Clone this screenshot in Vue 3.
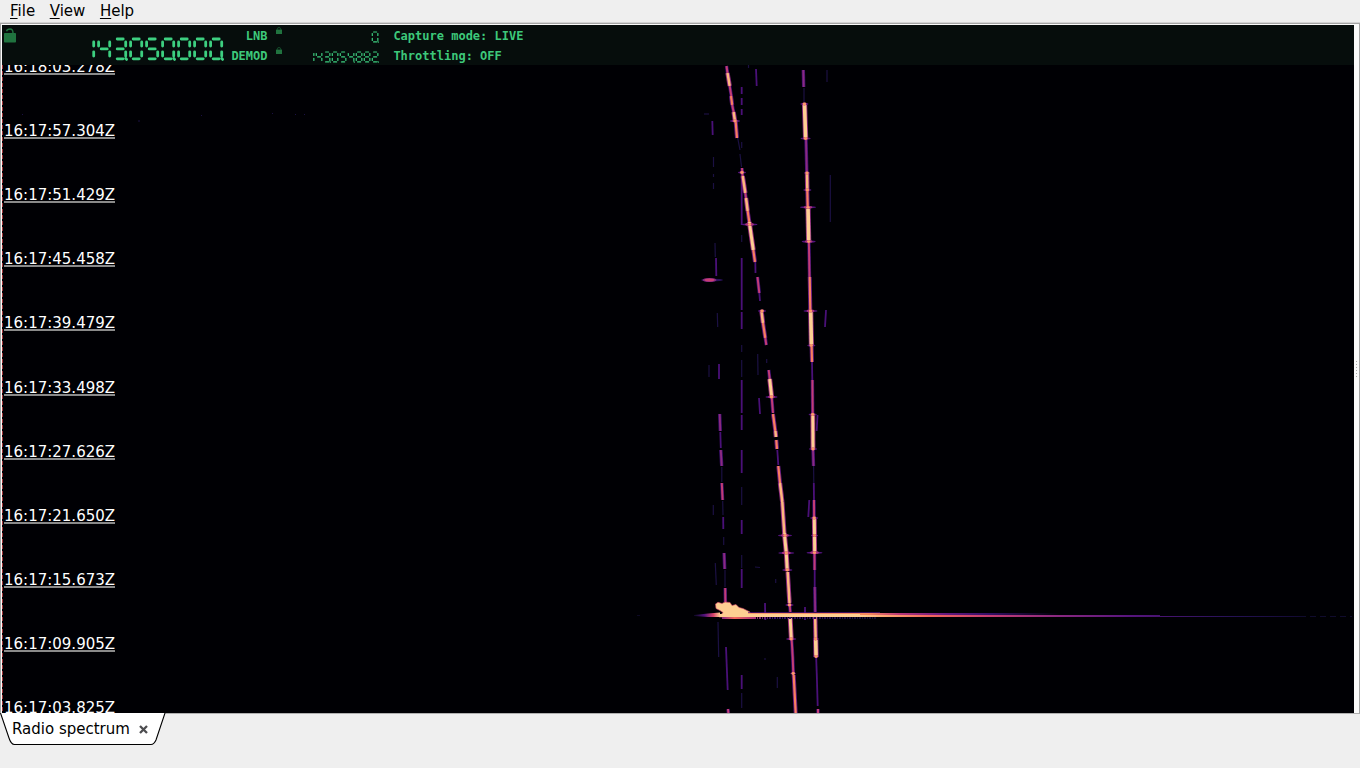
<template>
  <div class="window">
    <nav class="menu">
      <span v-for="item in menu" :key="item" class="menu__item"><u>{{ item[0] }}</u>{{ item.slice(1) }}</span>
    </nav>

    <main class="panel">
      <section class="view">
        <header class="bar">
          <svg class="bar__lock" viewBox="0 0 12 15">
            <rect x="0" y="5" width="12" height="9.5" rx="0.8" fill="#20733f" />
            <path d="M2.5 3.2 C3 1.4 4.5 1 6 1 C8.3 1 9 2 9 5" fill="none" stroke="#20733f" stroke-width="1.4" />
          </svg>
          <svg class="lcd lcd--big" viewBox="0 0 144 24" role="img" aria-label="143.050.000">
            <line v-for="(s, i) in lcd('143050000')" :key="i" :x1="s[0]" :y1="s[1]" :x2="s[2]" :y2="s[3]" />
          </svg>
          <div class="bar__labels">
            <span>LNB</span>
            <span>DEMOD</span>
          </div>
          <div class="bar__locks">
            <svg v-for="n in 2" :key="n" viewBox="0 0 6 7">
              <rect x="0" y="2.6" width="6" height="4.4" fill="#20733f" />
              <path d="M1.3 3 V1.8 Q1.3 0.6 3 0.6 T4.7 1.8 V3" fill="none" stroke="#174f2e" />
            </svg>
          </div>
          <div class="bar__values">
            <svg class="lcd" viewBox="0 0 144 24" role="img" aria-label="0">
              <line v-for="(s, i) in lcd('        0')" :key="i" :x1="s[0]" :y1="s[1]" :x2="s[2]" :y2="s[3]" />
            </svg>
            <svg class="lcd" viewBox="0 0 144 24" role="img" aria-label="143.054.882">
              <line v-for="(s, i) in lcd('143054882')" :key="i" :x1="s[0]" :y1="s[1]" :x2="s[2]" :y2="s[3]" />
            </svg>
          </div>
          <div class="bar__status">
            <span>Capture mode: LIVE</span>
            <span>Throttling: OFF</span>
          </div>
        </header>

        <div class="waterfall">
          <svg class="waterfall__plot" viewBox="2 65 1352 648">
            <defs>
              <linearGradient id="upper" gradientUnits="userSpaceOnUse" x1="740" y1="0" x2="1060" y2="0">
                <stop offset="0" stop-color="#fe9f6d" />
                <stop offset="0.4" stop-color="#f9885f" />
                <stop offset="0.5" stop-color="#b63679" />
                <stop offset="0.64" stop-color="#641a80" />
                <stop offset="0.78" stop-color="#331067" />
                <stop offset="1" stop-color="#000004" />
              </linearGradient>
              <linearGradient id="lower" gradientUnits="userSpaceOnUse" x1="860" y1="0" x2="1350" y2="0">
                <stop offset="0" stop-color="#fecf92" />
                <stop offset="0.05" stop-color="#fea973" />
                <stop offset="0.14" stop-color="#f4685c" />
                <stop offset="0.26" stop-color="#c83e73" />
                <stop offset="0.4" stop-color="#8c2981" />
                <stop offset="0.55" stop-color="#57157e" />
                <stop offset="0.76" stop-color="#251255" />
                <stop offset="1" stop-color="#05041a" />
              </linearGradient>
              <linearGradient id="head" gradientUnits="userSpaceOnUse" x1="694" y1="0" x2="720" y2="0">
                <stop offset="0" stop-color="#0d0925" />
                <stop offset="0.4" stop-color="#51127c" />
                <stop offset="0.75" stop-color="#d8456c" />
                <stop offset="1" stop-color="#fecf92" />
              </linearGradient>
              <linearGradient id="under" gradientUnits="userSpaceOnUse" x1="722" y1="0" x2="878" y2="0">
                <stop offset="0" stop-color="#8c2981" />
                <stop offset="0.08" stop-color="#f4685c" />
                <stop offset="0.2" stop-color="#b63679" />
                <stop offset="0.32" stop-color="#3b0f70" />
                <stop offset="1" stop-color="#140e36" />
              </linearGradient>
            </defs>

            <line class="marker" x1="2.5" y1="65" x2="2.5" y2="713" />

            <line v-for="(t, i) in faint" :key="'f' + i" :x1="t[0]" :y1="t[1]" :x2="t[2]" :y2="t[3]" :class="'level-' + t[4]" />

            <g v-for="(track, n) in tracks" :key="'t' + n">
              <line v-for="(t, i) in track" :key="'h' + i" :x1="t[0]" :y1="t[1]" :x2="t[2]" :y2="t[3]" :class="'halo-' + t[4]" />
              <line v-for="(t, i) in track" :key="i" :x1="t[0]" :y1="t[1]" :x2="t[2]" :y2="t[3]" :class="'level-' + t[4]" />
            </g>

            <g v-for="(c, i) in crossings" :key="'c' + i">
              <ellipse :cx="c[0]" :cy="c[1]" :rx="c[2]" ry="1.1" fill="#51127c" />
              <ellipse :cx="c[0]" :cy="c[1]" :rx="c[2] * 0.55" ry="1.4" fill="#a8327d" />
              <ellipse :cx="c[0]" :cy="c[1]" rx="1.7" ry="1.4" fill="#fd9a6a" />
            </g>

            <ellipse cx="712" cy="280" rx="11" ry="1.3" fill="#2a115c" />
            <ellipse cx="709.5" cy="280" rx="7" ry="2" fill="#822681" />
            <ellipse cx="709.5" cy="280" rx="5" ry="1.4" fill="#c83e73" />

            <!-- meteor echo -->
            <path class="echo" d="M715.5 604 L718 602.3 L722 603.5 L725 602 L730 602.5 L732 605.5 L736 604.5 L739 607.5 L743 608.5 L750 612 L751 617 L719 617 L723 612.5 L720 610.5 L716 608.5 Z" />
            <path d="M694 615 L708 613.4 L720 612.6 V617 L708 617 L694 616 Z" fill="url(#head)" />
            <rect x="748" y="612" width="132" height="1" fill="#51127c" opacity="0.7" />
            <rect x="748" y="613" width="312" height="2" fill="url(#upper)" />
            <rect x="720" y="614" width="140" height="3" fill="#fecf92" />
            <rect x="860" y="615" width="300" height="2" fill="url(#lower)" />
            <rect x="1160" y="616" width="140" height="1" fill="url(#lower)" />
            <line x1="1300" y1="616.5" x2="1352" y2="616.5" stroke="#100b2d" stroke-dasharray="6 4" />
            <rect x="722" y="617" width="32" height="2" fill="url(#under)" />
            <line x1="754" y1="618" x2="876" y2="618.01" stroke="url(#under)" stroke-width="2" stroke-dasharray="2 1 1 1" />
            <line x1="637" y1="615.5" x2="640" y2="615.5" stroke="#0d0925" />
          </svg>

          <div class="times">
            <span v-for="time in times" :key="time" class="times__item">{{ time }}</span>
          </div>
        </div>
      </section>
      <div class="handle"><i v-for="n in 6" :key="n" /></div>
    </main>

    <footer class="tabs">
      <div class="tab">
        <svg class="tab__shape" viewBox="0 0 168 33">
          <path d="M0.5 0 L9 25 Q11 31.5 14.5 31.5 H151 Q154 31.5 156 27 L165 0" fill="#fff" stroke="#000" stroke-width="1.1" />
        </svg>
        <span class="tab__name">Radio spectrum</span>
        <svg class="tab__close" viewBox="0 0 9 9">
          <path d="M1 1 L8 8 M8 1 L1 8" stroke="#4d4d50" stroke-width="2.3" />
        </svg>
      </div>
    </footer>
  </div>
</template>

<script setup>
const menu = ['File', 'View', 'Help']

const times = [
  '16:18:03.278Z', '16:17:57.304Z', '16:17:51.429Z', '16:17:45.458Z',
  '16:17:39.479Z', '16:17:33.498Z', '16:17:27.626Z', '16:17:21.650Z',
  '16:17:15.673Z', '16:17:09.905Z', '16:17:03.825Z'
]

// seven segment display, one digit is a 16x24 cell
const segments = {
  a: [5.2, 2, 11.2, 2],
  b: [13.7, 5, 13.7, 9],
  c: [13.7, 14.8, 13.7, 19],
  d: [5.2, 21.8, 11.2, 21.8],
  e: [2.6, 14.8, 2.6, 19],
  f: [2.6, 5, 2.6, 9],
  g: [5.2, 11.9, 11.2, 11.9]
}
const digits = {
  0: 'abcdef', 1: 'bc', 2: 'abged', 3: 'abgcd', 4: 'fgbc',
  5: 'afgcd', 6: 'afgecd', 7: 'abc', 8: 'abcdefg', 9: 'abcdfg'
}

const lcd = (value) => {
  const lines = []
  value.split('').forEach((ch, i) => {
    if (!digits[ch]) return
    const x = i * 16
    for (const name of digits[ch]) {
      const s = segments[name]
      lines.push([s[0] + x, s[1], s[2] + x, s[3]])
    }
    // group separator
    if (i % 3 === 2) lines.push([x + 13.8, 21.4, x + 14.6, 22.4])
  })
  return lines
}

// [x1, y1, x2, y2, level]
const tracks = [
  [
    [726.5, 66, 727.5, 73, 3], [727.5, 73, 729.7, 86, 5], [729.7, 86, 731.3, 96, 3],
    [731, 96, 732.2, 105, 4], [732.2, 105, 733.6, 112, 3], [733.6, 112, 735, 121, 5],
    [735.7, 122, 737, 138, 4], [737.7, 138, 740, 150, 1], [740, 154, 741.5, 167, 1],
    [742, 168, 742.5, 176, 3], [742.7, 176, 745.3, 193, 5], [745.3, 193, 746, 198, 3],
    [746, 198, 747.7, 211, 5], [747.7, 211, 749.3, 222, 4], [749.3, 222, 753.3, 250, 6],
    [753.3, 250, 755, 262, 4], [755.3, 262, 755.5, 273, 2], [757.5, 277, 759.3, 293, 3],
    [759.3, 293, 760, 301, 2], [761.3, 310, 763, 323, 5], [763, 323, 765.3, 338, 4],
    [765.3, 338, 766.3, 345, 3], [768.7, 370, 769.7, 379, 3], [769.7, 379, 771.7, 397, 6],
    [771.7, 397, 773, 413, 3], [773, 414, 775.3, 431, 4], [775.4, 431, 776, 437, 5],
    [776.3, 440, 777, 449, 4], [777.3, 450, 778.3, 465, 2], [778.3, 466, 780, 483, 4],
    [780, 483, 782.3, 502, 5], [782.3, 502, 784.3, 533, 5], [784.3, 533, 786.3, 553, 6],
    [786.3, 553, 787.3, 571, 6], [787.7, 572, 789.5, 603, 5], [789.5, 603, 790.3, 612, 3],
    [790.2, 618, 791.3, 639, 6], [791.7, 640, 792.7, 657, 3], [792.7, 657, 793.3, 673, 3],
    [793.7, 675, 795.7, 713, 4]
  ],
  [
    [803.3, 70, 803.7, 87, 8], [804, 88, 804, 102, 1], [804.5, 103, 805.6, 138, 7],
    [806, 139, 806.8, 172, 8], [807, 172, 807.3, 190, 5], [807.3, 190, 807.7, 207, 4],
    [808, 207, 808.7, 242, 7], [808.9, 242, 809.5, 277, 3], [809.7, 277, 810.3, 310, 4],
    [810.7, 310, 811.4, 345, 7], [811.6, 346, 812, 362, 4], [812, 362, 812.3, 380, 2],
    [812.4, 380, 812.7, 414, 3], [812.8, 414, 813, 449, 6], [813, 449, 813.5, 466, 8],
    [813.6, 466, 813.8, 483, 1], [813.8, 483, 814, 500, 2], [814, 500, 814.1, 517, 3],
    [814.3, 518, 814.7, 553, 6], [814.5, 553, 814.6, 570, 3], [814.7, 570, 814.7, 587, 2],
    [814.8, 587, 815.2, 612, 8], [815.2, 617, 815.6, 638, 5], [815.7, 638, 816.1, 657, 7],
    [816.2, 658, 816.8, 675, 2], [816.8, 675, 817.7, 706, 2], [818, 709, 818, 713, 3]
  ],
  [
    [716, 258, 716.3, 276, 2], [719.7, 414, 720.3, 431, 8], [720.3, 432, 720.8, 448, 2],
    [720.8, 450, 721.7, 466, 8], [721.8, 467, 721.8, 482, 1], [721.8, 483, 722.6, 500, 3],
    [722.7, 501, 723, 515, 1], [723.2, 517, 723.3, 529, 2], [723.7, 537, 723.7, 545, 1],
    [724.1, 553, 724.7, 569, 8], [725, 570, 725, 587, 1], [725.2, 588, 725.4, 602, 3],
    [726, 647, 727.7, 690, 2], [728, 709, 728.4, 713, 3]
  ]
]

const column = [
  [87, 94, 2], [98, 105, 2], [109, 115, 2], [142, 148, 1], [177, 225, 2], [235, 242, 1],
  [258, 310, 2], [312, 329, 2], [345, 352, 1], [360, 377, 1], [380, 400, 2], [400, 413, 2],
  [415, 430, 2], [450, 473, 2], [487, 505, 1], [520, 534, 2], [555, 568, 1], [569, 588, 2],
  [675, 689, 2], [693, 708, 1]
]

const faint = [
  ...column.map(([from, to, level]) => [741.7, from, 741.7, to, level]),
  [712.3, 121, 712.7, 135, 2], [713.5, 157, 713.5, 167, 1], [713.5, 174, 713.5, 177, 1],
  [713.5, 183, 713.5, 189, 1], [715, 243, 715.3, 257, 1], [717.3, 313, 717.7, 327, 1],
  [719, 364, 719, 379, 2], [709, 365, 709, 377, 1], [718, 622, 718.7, 657, 1],
  [756, 69, 756.7, 86, 2], [748.5, 65, 748.5, 68, 1], [827, 70, 827, 82, 1],
  [830.3, 175, 830.3, 222, 1], [826, 310, 825, 327, 2], [757.7, 354, 758, 375, 1],
  [759, 398, 760, 414, 2], [817.5, 415, 816.7, 431, 2], [809.3, 500, 808.3, 517, 2],
  [713.3, 505, 713.3, 515, 1], [715.3, 563, 716.3, 585, 1], [765, 603, 765.3, 620, 2],
  [777.3, 677, 777.3, 688, 1], [765, 658, 765, 660, 1], [704, 114, 709, 114, 1],
  [775.7, 579, 775.7, 583, 1], [805, 607, 805, 620, 2], [755, 567, 760, 567.5, 1],
  [766.7, 359, 766.7, 363, 1],
  [138, 121, 140, 121, 1], [201, 115.5, 202, 115.5, 1], [272, 113.5, 273, 113.5, 1],
  [295, 114.5, 296, 114.5, 1], [304, 114.5, 305, 114.5, 1], [22, 114.5, 23, 114.5, 1]
]

// [x, y, half width]
const crossings = [
  [735, 121, 5], [742, 172.5, 4], [749.5, 224.5, 8], [762, 311, 4], [771.5, 397, 6],
  [785, 535.5, 7], [786.3, 553, 8], [787.3, 570, 5], [789.5, 605, 4], [791.2, 639, 5],
  [793.2, 673.5, 3], [804.4, 104, 4], [805.6, 138.5, 5], [807, 173, 3], [807.3, 190, 4],
  [808, 207.3, 8], [808.7, 241.6, 7], [810.5, 311, 7], [811.3, 345.5, 4], [812.7, 414.5, 4],
  [813, 449, 4], [814.2, 518, 4], [814.5, 535.5, 3.5], [814.5, 552.7, 8], [815.6, 639, 3],
  [816.1, 656.5, 3]
]
</script>

<style>
body {
  overflow: hidden;
}
</style>

<style scoped>
.window {
  display: flex;
  flex-direction: column;
  width: 1360px;
  height: 768px;
  background: #efefef;
  color: #000;
  font-family: 'DejaVu Sans', sans-serif;
  font-size: 15px;
}

.menu {
  display: flex;
  gap: 14.6px;
  height: 23px;
  padding-left: 10px;
  line-height: 22px;
  border-bottom: 1px solid #d4d4d4;
  box-sizing: border-box;
}

.menu__item u {
  text-underline-offset: 2px;
  text-decoration-thickness: 1px;
}

.panel {
  display: flex;
  height: 691px;
  box-sizing: border-box;
  padding: 1px 0 0 1px;
  border: 1px solid #a5a5a5;
  border-bottom: 1px solid #b0b0b0;
  background: #fbfbfb;
}

.view {
  width: 1352px;
  display: flex;
  flex-direction: column;
}

.bar {
  display: flex;
  height: 40px;
  background: #060d0c;
  color: #3dc87a;
  font: bold 12px/20px 'DejaVu Sans Mono', monospace;
}

.bar__lock {
  width: 12px;
  height: 15px;
  margin: 3px 0 0 2px;
}

.lcd {
  width: 72px;
  height: 12px;
  overflow: visible;
}

.lcd line {
  stroke: #3dcf80;
  stroke-width: 2.4;
  stroke-linecap: round;
}

.lcd--big {
  width: 144px;
  height: 24px;
  margin: 12px 0 0 64px;
}

.lcd--big line {
  stroke-width: 2.8;
}

.bar__labels {
  display: flex;
  flex-direction: column;
  align-items: flex-end;
  box-sizing: border-box;
  width: 44px;
  padding: 1px 0.5px 0 0;
}

.bar__locks {
  display: flex;
  flex-direction: column;
  gap: 13px;
  padding: 2px 0 0 8px;
}

.bar__locks svg {
  width: 6px;
  height: 7px;
}

.bar__values {
  display: flex;
  flex-direction: column;
  gap: 8px;
  padding: 6px 0 0 25px;
}

.bar__status {
  display: flex;
  flex-direction: column;
  padding: 1px 0 0 14.4px;
}

.waterfall {
  position: relative;
  height: 648px;
  overflow: hidden;
  background: #000004;
}

.waterfall__plot {
  display: block;
  width: 1352px;
  height: 648px;
}

.marker {
  stroke: #a3373b;
  stroke-dasharray: 4 2;
}

.level-1 { stroke: #1b1044; stroke-width: 1.2; }
.level-2 { stroke: #4a1079; stroke-width: 1.8; }
.level-3 { stroke: #c43c75; stroke-width: 2; }
.level-4 { stroke: #fa7d5e; stroke-width: 2.2; }
.level-5 { stroke: #feb77e; stroke-width: 2.5; }
.level-6 { stroke: #fecf92; stroke-width: 3; }
.level-7 { stroke: #fecf92; stroke-width: 3.6; }
.level-8 { stroke: #8c2981; stroke-width: 1.9; }

.halo-1,
.halo-2 { stroke: none; }
.halo-3,
.halo-8 { stroke: #3b0f70; stroke-width: 3.4; }
.halo-4 { stroke: #641a80; stroke-width: 4; }
.halo-5 { stroke: #8c2981; stroke-width: 4.4; }
.halo-6 { stroke: #9f2f7f; stroke-width: 4.8; }
.halo-7 { stroke: #8c2981; stroke-width: 5.2; }

.echo {
  fill: #fecf92;
  stroke: #d8456c;
  stroke-width: 0.6;
}

.times {
  position: absolute;
  top: -54px;
  left: 2px;
  display: flex;
  flex-direction: column;
  color: #fff;
}

.times__item {
  display: flex;
  align-items: flex-end;
  box-sizing: border-box;
  height: 64px;
  width: 111px;
  line-height: 12px;
  border-bottom: 2px solid #8a8a8a;
}

.times__item:nth-child(6) {
  height: 65px;
}

.handle {
  display: flex;
  flex: 1;
  flex-direction: column;
  align-items: center;
  justify-content: center;
  gap: 2px;
}

.handle i {
  width: 1px;
  height: 1px;
  background: #aaa;
}

.tabs {
  flex: 1;
}

.tab {
  position: relative;
  display: flex;
  align-items: center;
  gap: 9px;
  width: 168px;
  height: 30px;
  padding-left: 12px;
  box-sizing: border-box;
}

.tab__shape {
  position: absolute;
  left: 0;
  top: -1px;
  width: 168px;
  height: 33px;
}

.tab__name,
.tab__close {
  position: relative;
}

.tab__name {
  line-height: 18px;
  padding-bottom: 1px;
}

.tab__close {
  width: 9px;
  height: 9px;
}
</style>
